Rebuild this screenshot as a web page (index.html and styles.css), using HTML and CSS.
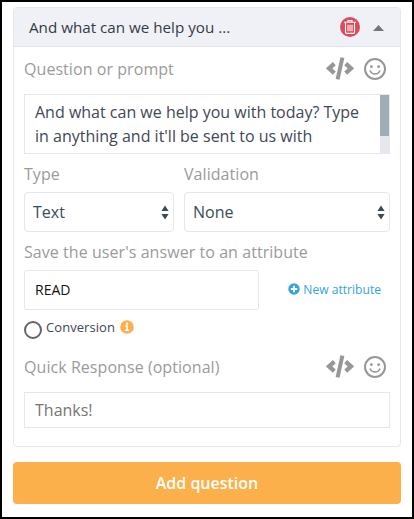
FILE: index.html
```html
<!DOCTYPE html>
<html lang="en">
<head>
    <meta charset="UTF-8">
    <meta name="viewport" content="width=device-width, initial-scale=1.0">
    <title>Add question</title>
    <link rel="stylesheet" href="styles.css">
</head>
<body>
    <svg class="sprite" width="0" height="0">
        <symbol id="icon-code" viewBox="0 0 28 23">
            <path d="M8.3 6.6L3.1 11.4L8.3 16.2M19.7 6.6L24.9 11.4L19.7 16.2" fill="none" stroke="currentColor" stroke-width="4.3"/>
            <path d="M16.4 .6L11.6 22.4" fill="none" stroke="currentColor" stroke-width="4"/>
        </symbol>
        <symbol id="icon-smile" viewBox="0 0 22 22">
            <circle cx="11" cy="11" r="10" fill="none" stroke="currentColor" stroke-width="2"/>
            <circle cx="7.4" cy="8.7" r="1.4" fill="currentColor"/>
            <circle cx="14.6" cy="8.7" r="1.4" fill="currentColor"/>
            <path d="M6.2 13Q7.6 16 11 16T15.8 13" fill="none" stroke="currentColor" stroke-width="1.6" stroke-linecap="round"/>
        </symbol>
        <symbol id="icon-sort" viewBox="0 0 8 15">
            <path d="M4 .5L7.6 6H.4ZM.4 9H7.6L4 14.5Z" fill="currentColor"/>
        </symbol>
    </svg>

    <div class="panel">
        <section class="card">
            <header class="card-header">
                <h2>And what can we help you ...</h2>
                <svg class="trash" viewBox="0 0 20 20">
                    <circle cx="10" cy="10" r="10" fill="#dc4a5c"/>
                    <path d="M4 5.3H16M8 5V3.6H12V5M5.5 5.5V15.2Q5.5 16.4 6.7 16.4H13.3Q14.5 16.4 14.5 15.2V5.5M8 7.8V14.2M10 7.8V14.2M12 7.8V14.2" fill="none" stroke="#fff" stroke-width="1.1"/>
                </svg>
                <span class="caret"></span>
            </header>

            <form class="card-body">
                <div class="label-row">
                    <label>Question or prompt</label>
                    <span class="tools">
                        <svg class="code"><use href="#icon-code"/></svg>
                        <svg class="smile"><use href="#icon-smile"/></svg>
                    </span>
                </div>
                <div class="prompt">
                    <p>And what can we help you with today? Type<br>in anything and it'll be sent to us with</p>
                    <div class="scrollbar"><div class="thumb"></div></div>
                </div>

                <div class="selects">
                    <div class="field">
                        <label>Type</label>
                        <div class="select">
                            <span>Text</span>
                            <svg class="sort"><use href="#icon-sort"/></svg>
                        </div>
                    </div>
                    <div class="field">
                        <label>Validation</label>
                        <div class="select">
                            <span>None</span>
                            <svg class="sort"><use href="#icon-sort"/></svg>
                        </div>
                    </div>
                </div>

                <label class="attribute-label">Save the user's answer to an attribute</label>
                <div class="attribute-row">
                    <input class="attribute" type="text" value="READ">
                    <a class="new-attribute">
                        <svg viewBox="0 0 12 12">
                            <circle cx="6" cy="6" r="5.7" fill="#35a5dc"/>
                            <path d="M6 2.8V9.2M2.8 6H9.2" stroke="#fff" stroke-width="1.8"/>
                        </svg>
                        <span>New attribute</span>
                    </a>
                </div>

                <div class="conversion">
                    <span class="radio"></span>
                    <span class="conversion-text">Conversion</span>
                    <svg class="info" viewBox="0 0 14 14">
                        <circle cx="7" cy="7" r="6.8" fill="#fbb04c"/>
                        <path d="M5.2 6H7.2V10.2M5 10.3H9.2" fill="none" stroke="#fff" stroke-width="1.5"/>
                        <rect x="6" y="2.7" width="2" height="2" fill="#fff"/>
                    </svg>
                </div>

                <div class="label-row response-row">
                    <label>Quick Response (optional)</label>
                    <span class="tools">
                        <svg class="code"><use href="#icon-code"/></svg>
                        <svg class="smile"><use href="#icon-smile"/></svg>
                    </span>
                </div>
                <input class="response" type="text" placeholder="Thanks!">
            </form>
        </section>

        <button class="add" type="button">Add question</button>
    </div>
</body>
</html>
```
FILE: styles.css
```css
* {
    margin: 0;
    padding: 0;
    box-sizing: border-box;
}

body {
    font-family: "Open Sans", "Noto Sans", sans-serif;
    font-size: 16px;
    color: #414856;
    background: #fff;
}

.sprite {
    position: absolute;
}

.panel {
    height: 519px;
    padding: 5px 11px 0;
    border: 2px solid #000;
}

.card {
    height: 440px;
    border: 1px solid #e6e6ed;
    border-radius: 4px;
}

.card-header {
    display: flex;
    align-items: center;
    height: 39px;
    padding: 0 16px 0 15px;
    background: #f0f1f7;
    border-bottom: 1px solid #e3e4eb;
}

.card-header h2 {
    flex: 1;
    font-size: 15.2px;
    font-weight: 400;
    line-height: 22px;
    color: #343b45;
    white-space: nowrap;
}

.trash {
    width: 20px;
    height: 20px;
    margin-right: 13px;
}

.caret {
    width: 11px;
    height: 6px;
    margin-top: 2px;
    background: #757575;
    clip-path: polygon(50% 0, 100% 100%, 0 100%);
}

.card-body {
    padding: 0 10px;
}

label {
    display: block;
    line-height: 22px;
    letter-spacing: 0.06px;
    color: #9b9b9b;
    white-space: nowrap;
}

.label-row {
    display: flex;
    justify-content: space-between;
    height: 47px;
    padding-top: 11px;
}

.tools {
    display: flex;
    gap: 10px;
    margin-right: 4px;
    color: #979797;
}

.code {
    width: 28px;
    height: 23px;
    margin-top: -1px;
}

.smile {
    width: 22px;
    height: 22px;
}

.prompt {
    display: flex;
    height: 60px;
    border: 1px solid #e6e6ed;
}

.prompt p {
    flex: 1;
    padding: 5px 0 0 10px;
    line-height: 24px;
    white-space: nowrap;
}

.scrollbar {
    width: 9px;
    background: #e5e9ed;
}

.thumb {
    height: 41px;
    background: #9fadb6;
}

.selects {
    display: grid;
    grid-template-columns: 150px 206px;
    gap: 10px;
    margin-top: 9px;
}

.field label {
    margin-bottom: 7px;
}

.select {
    display: flex;
    align-items: center;
    justify-content: space-between;
    height: 40px;
    padding: 0 4px 0 8px;
    border: 1px solid #e6e6ed;
    border-radius: 4px;
    color: #3a4c59;
}

.sort {
    width: 8px;
    height: 15px;
}

.attribute-label {
    margin-top: 9px;
}

.attribute-row {
    display: flex;
    align-items: center;
    justify-content: space-between;
    margin-top: 7px;
    padding-right: 9px;
}

input {
    font: inherit;
    padding: 0 10px;
    border: 1px solid #e6e6ed;
    background: #fff;
    outline: none;
}

.attribute {
    width: 235px;
    height: 40px;
    padding-bottom: 1px;
    border-radius: 2px;
    font-size: 14px;
    color: #111;
}

.new-attribute {
    display: flex;
    align-items: center;
    gap: 3px;
    margin-bottom: 2px;
    font-size: 12.1px;
    color: #35a5dc;
    white-space: nowrap;
}

.new-attribute svg {
    width: 12px;
    height: 12px;
}

.conversion {
    display: flex;
    height: 45px;
    padding-top: 8px;
    font-size: 13px;
}

.radio {
    width: 18px;
    height: 18px;
    margin: 3px 4px 0 0;
    border: 2px solid #666;
    border-radius: 50%;
}

.conversion-text {
    line-height: 18px;
    letter-spacing: 0.07px;
}

.info {
    width: 14px;
    height: 14px;
    margin: 2px 0 0 5px;
}

.response-row {
    height: 37px;
    padding-top: 1px;
}

.response {
    display: block;
    width: 100%;
    height: 36px;
}

.response::placeholder {
    color: #757575;
}

.add {
    display: block;
    width: 100%;
    height: 42px;
    margin-top: 15px;
    border: none;
    border-radius: 4px;
    background: #fbb04c;
    font: inherit;
    font-weight: 600;
    color: #fff;
}
```
